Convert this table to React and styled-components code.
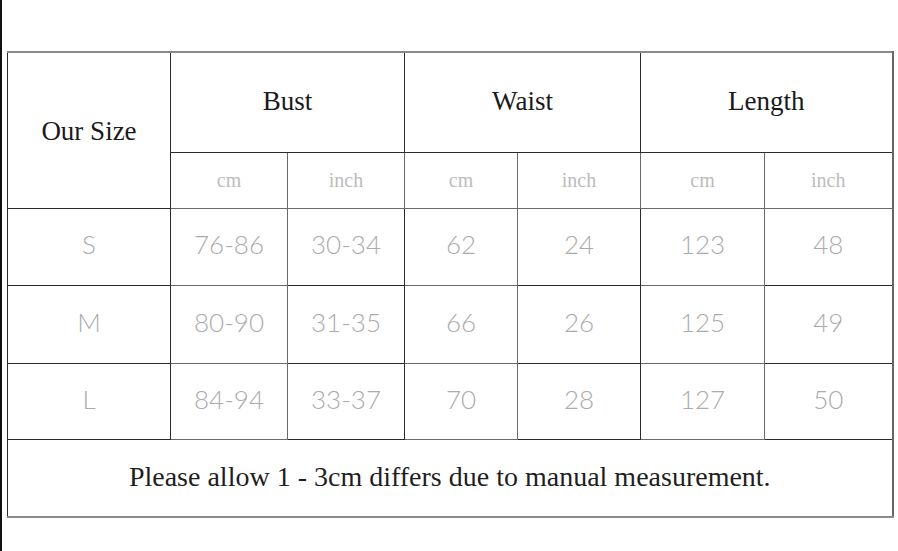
import React from 'react';
import styled, { createGlobalStyle } from 'styled-components';

const GlobalStyle = createGlobalStyle`
  html, body {
    margin: 0;
    padding: 0;
    background: #fff;
  }
`;

const Page = styled.div`
  width: 898px;
  height: 551px;
  box-sizing: border-box;
  border-left: 2px solid #111;
  padding: 51px 0 0 5px;
`;

const Table = styled.table`
  width: 885px;
  border-collapse: collapse;
  table-layout: fixed;
  border-top: 2px solid #8a8a8a;
  border-bottom: 2px solid #8a8a8a;
  border-left: 1px solid #666;
  border-right: 2px solid #666;
`;

const Cell = styled.td`
  border: 1px solid ${p => (p.$soft ? '#6a6a6a' : '#2a2a2a')};
  text-align: center;
  vertical-align: middle;
  padding: 0;
  height: ${p => p.$h}px;
`;

const HeadText = styled.span`
  font-family: "Liberation Serif", "DejaVu Serif", serif;
  font-size: 27px;
  color: #1a1a1a;
  position: relative;
  top: ${p => p.$shift || 0}px;
`;

const UnitText = styled.span`
  font-family: "Liberation Serif", "DejaVu Serif", serif;
  font-size: 20px;
  color: #bcbcbc;
`;

const Value = styled.span`
  font-family: "Lato", "Open Sans", sans-serif;
  font-weight: 300;
  font-size: 26px;
  color: #ababab;
  position: relative;
  top: -3px;
`;

const Note = styled.span`
  font-family: "Liberation Serif", "DejaVu Serif", serif;
  font-size: 28px;
  color: #1f1f1f;
  position: relative;
  top: -1px;
`;

const widths = [163, 117, 117, 113, 123, 124, 128];

const groups = ['Bust', 'Waist', 'Length'];

const rows = [
  { size: 'S', values: ['76-86', '30-34', '62', '24', '123', '48'], h: 76 },
  { size: 'M', values: ['80-90', '31-35', '66', '26', '125', '49'], h: 77 },
  { size: 'L', values: ['84-94', '33-37', '70', '28', '127', '50'], h: 75 },
];

export default function App() {
  return (
    <>
      <GlobalStyle />
      <Page>
        <Table>
          <colgroup>
            {widths.map((w, i) => (
              <col key={i} style={{ width: w }} />
            ))}
          </colgroup>
          <tbody>
            <tr>
              <Cell rowSpan={2} $h={99}>
                <HeadText $shift={1}>Our Size</HeadText>
              </Cell>
              {groups.map(g => (
                <Cell key={g} colSpan={2} $h={99}>
                  <HeadText $shift={-1}>{g}</HeadText>
                </Cell>
              ))}
            </tr>
            <tr>
              {groups.map(g => (
                <React.Fragment key={g}>
                  <Cell $h={55} $soft>
                    <UnitText>cm</UnitText>
                  </Cell>
                  <Cell $h={55} $soft>
                    <UnitText>inch</UnitText>
                  </Cell>
                </React.Fragment>
              ))}
            </tr>
            {rows.map(r => (
              <tr key={r.size}>
                <Cell $h={r.h}>
                  <Value>{r.size}</Value>
                </Cell>
                {r.values.map((v, i) => (
                  <Cell key={i} $h={r.h} $soft={i % 2 === 0}>
                    <Value>{v}</Value>
                  </Cell>
                ))}
              </tr>
            ))}
            <tr>
              <Cell colSpan={7} $h={76}>
                <Note>Please allow 1 - 3cm differs due to manual measurement.</Note>
              </Cell>
            </tr>
          </tbody>
        </Table>
      </Page>
    </>
  );
}
